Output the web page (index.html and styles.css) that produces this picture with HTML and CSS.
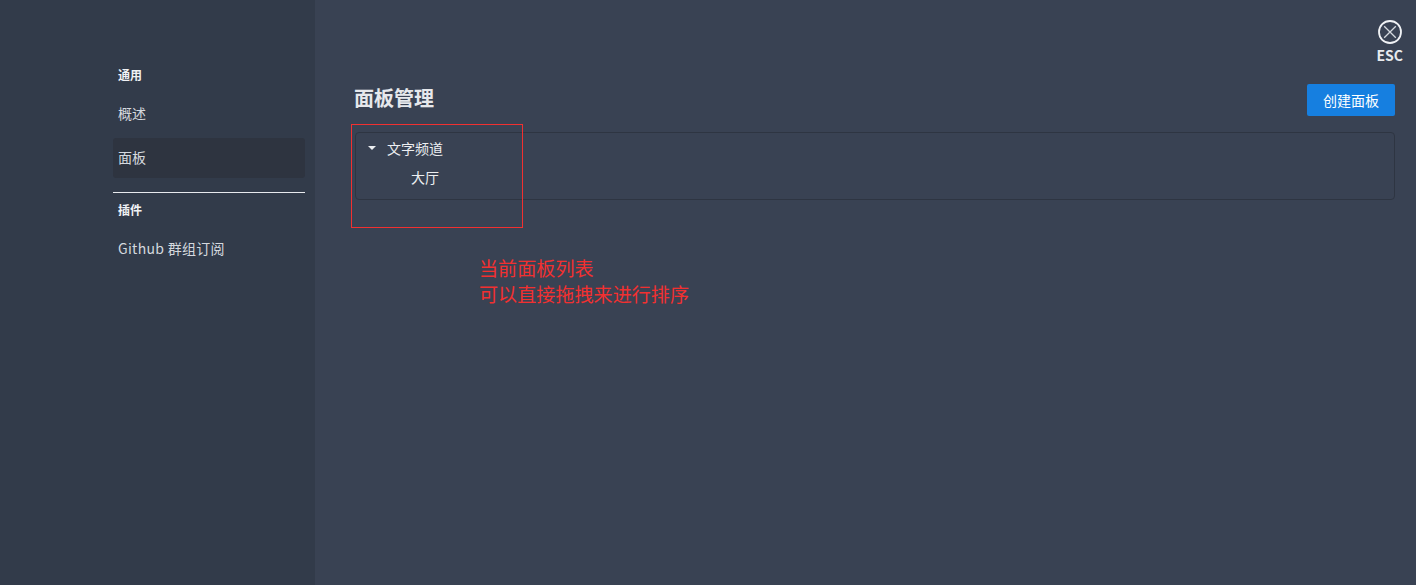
FILE: index.html
```html
<!DOCTYPE html>
<html lang="zh-CN">
<head>
    <meta charset="UTF-8">
    <title>面板管理</title>
    <link rel="stylesheet" href="styles.css">
</head>
<body>
    <div class="layout">
        <!-- 侧边栏 -->
        <div class="sidebar">
            <div class="sidebar-title">通用</div>
            <div class="sidebar-item first-item">概述</div>
            <div class="sidebar-item active">面板</div>
            <div class="sidebar-divider"></div>
            <div class="sidebar-title plugin-title">插件</div>
            <div class="sidebar-item plugin-item">Github 群组订阅</div>
        </div>

        <!-- 内容 -->
        <div class="content">
            <div class="close-button">
                <svg width="26" height="26" viewBox="0 0 26 26" fill="none">
                    <circle cx="13" cy="13" r="11" stroke="#f0f2f5" stroke-width="1.8"/>
                    <path d="M7.2 7.2l11.6 11.6M18.8 7.2L7.2 18.8" stroke="#d5d9df" stroke-width="1.3"/>
                </svg>
                <span>ESC</span>
            </div>
            <div class="content-header">
                <h2>面板管理</h2>
                <button class="create-button">创建面板</button>
            </div>
            <div class="tree">
                <div class="tree-row">
                    <span class="tree-caret"></span>
                    <span>文字频道</span>
                </div>
                <div class="tree-row tree-child">大厅</div>
            </div>
        </div>
    </div>

    <!-- 标注 -->
    <div class="note-box"></div>
    <div class="note-text">当前面板列表<br>可以直接拖拽来进行排序</div>
</body>
</html>
```

FILE: styles.css
```css
html, body {
    margin: 0;
    height: 100%;
    overflow: hidden;
}
body {
    font-family: "Noto Sans CJK SC", "Noto Sans", sans-serif;
    font-size: 14px;
    background-color: #394253;
    color: #e6e8ec;
}
.layout {
    display: flex;
    height: 585px;
}
.sidebar {
    width: 315px;
    box-sizing: border-box;
    padding: 60px 10px 0 113px;
    background-color: #323b4a;
}
.sidebar-title {
    height: 32px;
    line-height: 30px;
    padding-left: 5px;
    font-size: 12px;
    font-weight: bold;
    color: #f0f2f5;
}
.plugin-title {
    margin-top: 2px;
}
.sidebar-item {
    height: 40px;
    line-height: 38px;
    margin-bottom: 4px;
    padding-left: 5px;
    border-radius: 3px;
    color: #d5d9df;
}
.first-item {
    margin-top: 2px;
}
.plugin-item {
    margin-top: 2px;
    letter-spacing: 0.3px;
}
.sidebar-item.active {
    background-color: #2e3440;
}
.sidebar-divider {
    height: 1px;
    margin: 14px 0 0;
    background-color: #e8eaee;
}
.content {
    flex: 1;
    position: relative;
    padding: 84px 21px 0 40px;
}
.close-button {
    position: absolute;
    top: 19px;
    right: 13px;
    display: flex;
    flex-direction: column;
    align-items: center;
    font-size: 14px;
    font-weight: bold;
    color: #e8eaee;
}
.close-button span {
    line-height: 22px;
    margin-top: -1px;
}
.content-header {
    display: flex;
    justify-content: space-between;
    align-items: center;
    height: 32px;
    margin-bottom: 16px;
}
.content-header h2 {
    margin: 0 0 6px -1px;
    font-size: 20px;
    font-weight: bold;
    color: #e6e8ec;
}
.create-button {
    width: 88px;
    height: 32px;
    padding: 0;
    border: none;
    border-radius: 2px;
    font-family: inherit;
    font-size: 14px;
    color: #fff;
    background-color: #167fe0;
}
.tree {
    box-sizing: border-box;
    height: 68px;
    border: 1px solid #2e3542;
    border-radius: 4px;
}
.tree-row {
    display: flex;
    align-items: center;
    height: 29px;
    padding-left: 12px;
    font-size: 14px;
    color: #eceef1;
}
.tree-caret {
    width: 0;
    height: 0;
    margin-right: 11px;
    border-left: 4px solid transparent;
    border-right: 4px solid transparent;
    border-top: 4px solid #eceef1;
}
.tree-child {
    padding-left: 55px;
}
.note-box {
    position: absolute;
    left: 351px;
    top: 124px;
    width: 170px;
    height: 102px;
    border: 1px solid #f23030;
}
.note-text {
    position: absolute;
    left: 479px;
    top: 255px;
    font-size: 19.1px;
    line-height: 26px;
    color: #f23030;
}
```
